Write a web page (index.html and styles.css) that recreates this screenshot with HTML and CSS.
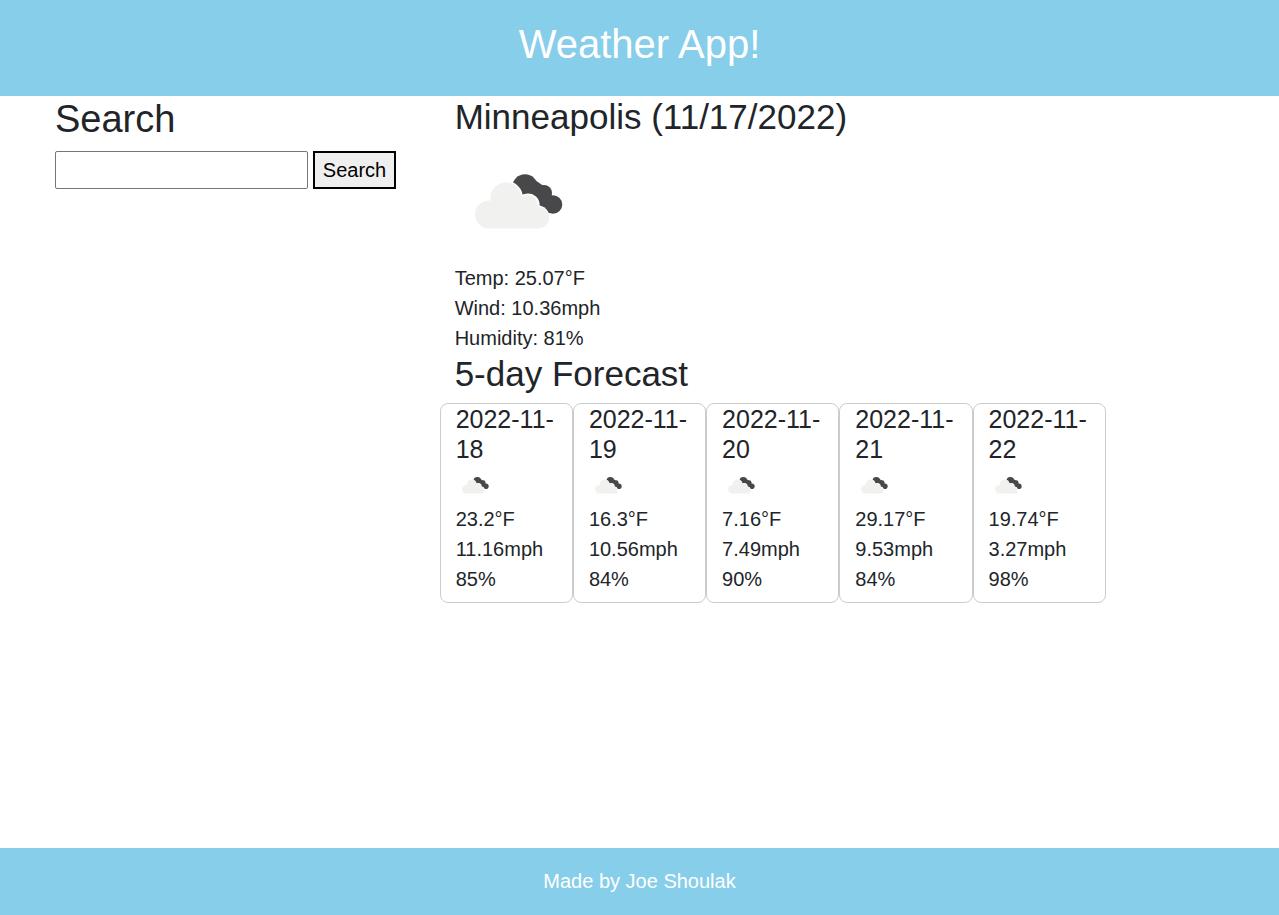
FILE: index.html
```html
<!DOCTYPE html>
<html lang="en">
<head>
<meta charset="utf-8">
<title>Weather App</title>
<link rel="stylesheet" href="styles.css">
</head>
<body>
<svg class="defs" width="0" height="0" aria-hidden="true">
  <symbol id="clouds" viewBox="0 0 88 56">
    <g fill="#48484a"><circle cx="50" cy="13" r="12.7"/><circle cx="69" cy="19" r="8"/><circle cx="78" cy="30.5" r="9.3"/><path d="M43 22 57 4 76 17 79 39H72Z"/></g>
    <g fill="#fff"><circle cx="31" cy="24" r="17"/><circle cx="53" cy="31" r="11.6"/><circle cx="62" cy="44" r="12.8"/></g>
    <g fill="#f1f1ef"><circle cx="14" cy="40.5" r="14"/><circle cx="31" cy="24" r="15.5"/><circle cx="53" cy="31" r="10"/><circle cx="63" cy="43.5" r="11"/><path d="M14 30 31 20 60 32 63 54.5H14Z"/></g>
  </symbol>
</svg>
<header class="header"><h1>Weather App!</h1></header>
<main class="row">
  <aside class="search">
    <h2>Search</h2>
    <form class="search-form"><input type="text" class="search-input" aria-label="City"><button type="button" class="search-button">Search</button></form>
  </aside>
  <section class="results">
    <div class="current">
      <h3>Minneapolis (11/17/2022)</h3>
      <svg class="icon"><use href="#clouds"/></svg>
      <p>Temp: 25.07°F</p><p>Wind: 10.36mph</p><p>Humidity: 81%</p>
      <h3>5-day Forecast</h3>
    </div>
    <div class="forecast">
      <article class="card"><h4>2022-11-18</h4><svg class="small-icon"><use href="#clouds"/></svg><p>23.2°F</p><p>11.16mph</p><p>85%</p></article>
      <article class="card"><h4>2022-11-19</h4><svg class="small-icon"><use href="#clouds"/></svg><p>16.3°F</p><p>10.56mph</p><p>84%</p></article>
      <article class="card"><h4>2022-11-20</h4><svg class="small-icon"><use href="#clouds"/></svg><p>7.16°F</p><p>7.49mph</p><p>90%</p></article>
      <article class="card"><h4>2022-11-21</h4><svg class="small-icon"><use href="#clouds"/></svg><p>29.17°F</p><p>9.53mph</p><p>84%</p></article>
      <article class="card"><h4>2022-11-22</h4><svg class="small-icon"><use href="#clouds"/></svg><p>19.74°F</p><p>3.27mph</p><p>98%</p></article>
    </div>
  </section>
</main>
<footer class="footer">Made by Joe Shoulak</footer>
</body>
</html>
```
FILE: styles.css
```css
* { box-sizing: border-box; }
body {
  margin: 0;
  min-height: 915px;
  display: flex;
  flex-direction: column;
  font: 20px/1.5 "Liberation Sans", Arial, sans-serif;
  color: #212529;
  background: #fff;
}
.defs { position: absolute; }
h1, h2, h3, h4 { margin: 0 0 8px; font-weight: 500; line-height: 1.2; }
h1, h2, h3, h4 { font-weight: 400; }
p { margin: 0; }
.header { height: 96px; padding: 20px; background: skyblue; color: #fff; text-align: center; }
h1 { font-size: 40px; }
h2 { font-size: 38px; line-height: 47px; }
h3 { font-size: 35px; }
h4 { font-size: 25px; }
.row { flex: 1; display: flex; padding: 0 40px; }
.search { width: 33.3333%; padding: 0 15px; }
.search-form { display: flex; gap: 5px; }
.search-input { width: 253px; height: 38px; border: 1px solid #767676; border-radius: 2px; background: #fff; font: inherit; }
.search-button { width: 83px; height: 38px; padding: 0; border: 2px solid #000; background: #efefef; color: #000; font: inherit; }
.results { width: 66.6667%; }
.current { padding: 0 15px; }
.icon { display: block; width: 88px; height: 56px; margin: 36px 0 33px 20px; }
.forecast { display: flex; }
.card { width: 16.6667%; height: 200px; padding: 0 15px; border: 1px solid rgba(0, 0, 0, .2); border-radius: 8px; }
.small-icon { display: block; width: 27px; height: 17px; margin: 13px 0 10px 6px; }
.footer { height: 67px; padding-top: 18px; background: skyblue; color: #fff; text-align: center; }
```
